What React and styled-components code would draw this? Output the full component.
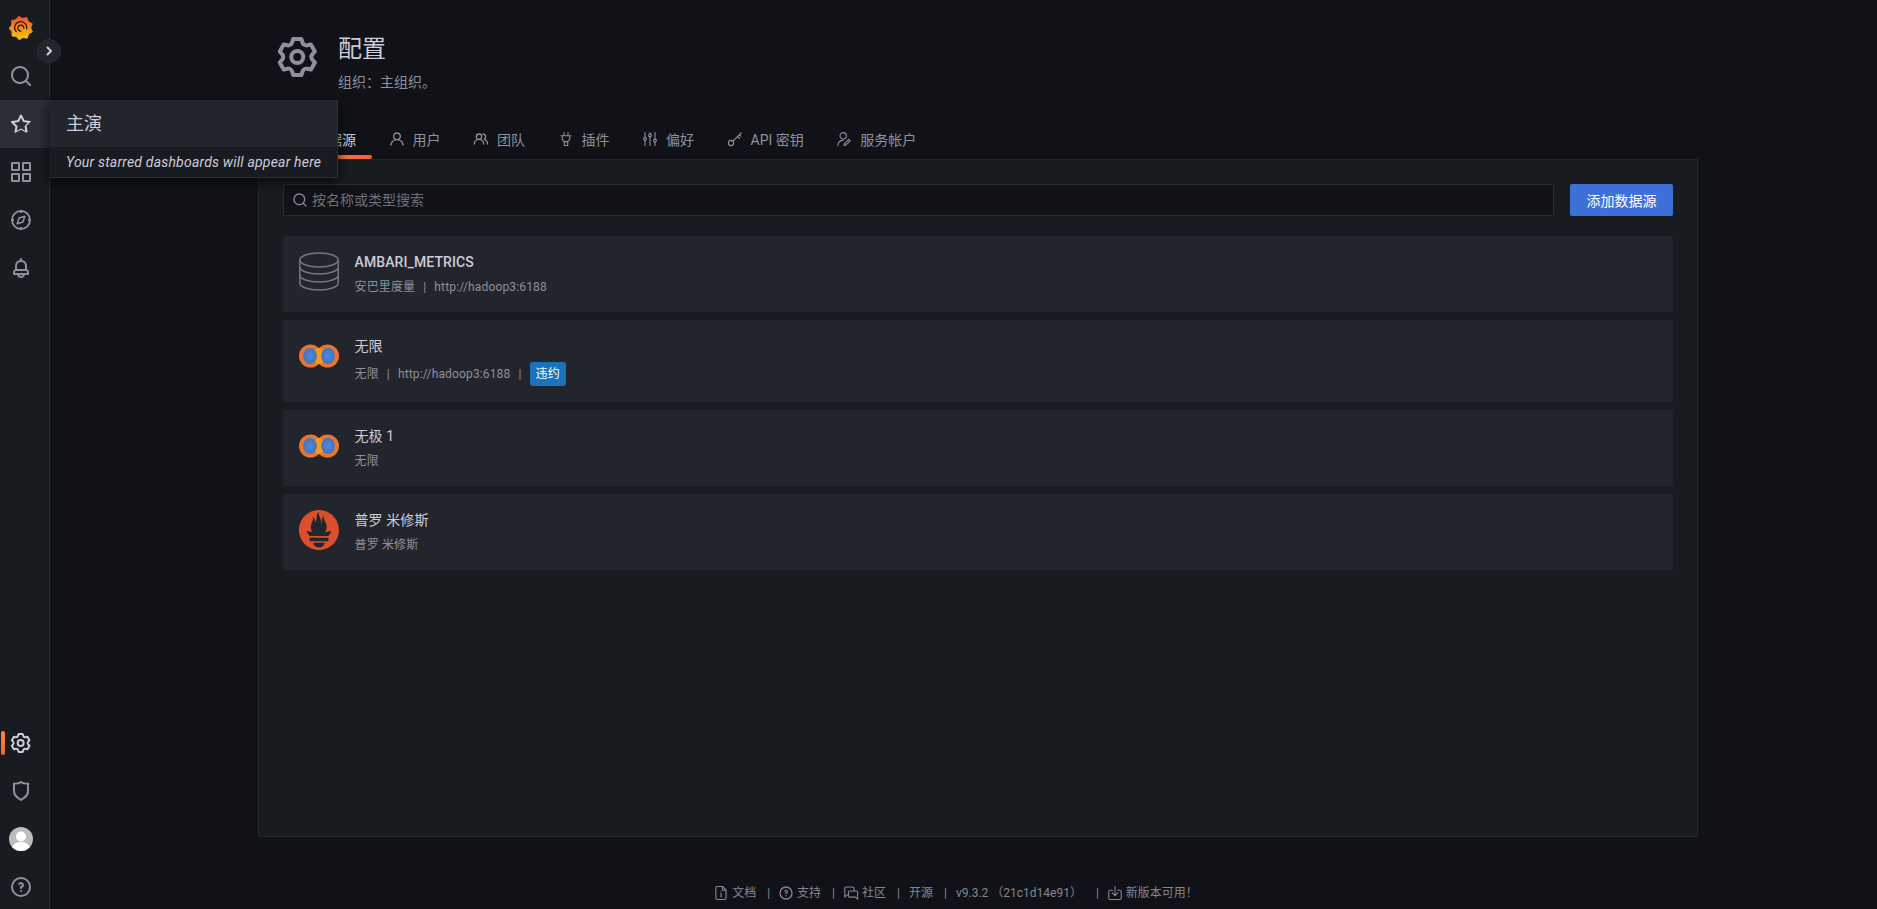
import React from 'react';
import styled, { createGlobalStyle } from 'styled-components';
import { SiPrometheus } from 'react-icons/si';

const GlobalStyle = createGlobalStyle`
    html, body, #root {
        margin: 0;
        height: 100%;
    }
    body {
        background: #111217;
        color: #ccccdc;
        font-family: Roboto, "Noto Sans CJK SC", sans-serif;
        font-size: 14px;
        overflow: hidden;
    }
`;

const Shell = styled.div`
    display: flex;
    height: 100vh;
    overflow: hidden;
`;

// left rail
const Rail = styled.nav`
    position: relative;
    flex: 0 0 50px;
    box-sizing: border-box;
    display: flex;
    flex-direction: column;
    padding-top: 4px;
    background: #181b1f;
    border-right: 1px solid #26292e;
`;
const RailBottom = styled.div`
    margin-top: auto;
    margin-bottom: -2px;
`;
const RailItem = styled.div`
    position: relative;
    height: 48px;
    display: flex;
    align-items: center;
    padding-left: 9px;
    color: ${props => (props.$light ? '#ccccdc' : '#8f9099')};
    background: ${props => (props.$hover ? '#2b2e34' : 'transparent')};
    &.active::before {
        content: "";
        position: absolute;
        left: 1px;
        top: 12px;
        width: 4px;
        height: 24px;
        border-radius: 2px;
        background: linear-gradient(0deg, #f55f3e, #ff8833);
    }
`;
const Toggle = styled.div`
    position: absolute;
    left: 37px;
    top: 39px;
    width: 24px;
    height: 24px;
    box-sizing: border-box;
    border-radius: 50%;
    border: 1px solid #2b2e34;
    background: #22252b;
    color: #ccccdc;
    display: flex;
    align-items: center;
    justify-content: center;
    z-index: 3;
`;
const Avatar = styled.div`
    width: 24px;
    height: 24px;
    border-radius: 50%;
    overflow: hidden;
    background: #bdbdbd;
`;
const Flyout = styled.div`
    position: absolute;
    left: 49px;
    top: 100px;
    width: 289px;
    box-sizing: border-box;
    border-right: 1px solid #2a2d33;
    border-bottom: 1px solid #2a2d33;
    border-radius: 0 0 2px 0;
    box-shadow: 0 4px 12px rgba(1, 4, 9, 0.75);
    z-index: 2;
`;
const FlyoutHead = styled.div`
    height: 47px;
    box-sizing: border-box;
    padding: 0 0 3px 17px;
    display: flex;
    align-items: center;
    background: #22252b;
    font-size: 18px;
`;
const FlyoutBody = styled.div`
    height: 30px;
    box-sizing: border-box;
    padding: 0 0 1px 17px;
    display: flex;
    align-items: center;
    background: #181b1f;
    font-size: 14px;
    font-style: italic;
    letter-spacing: 0.2px;
    white-space: nowrap;
`;

// page
const Main = styled.main`
    flex: 1;
    min-width: 0;
    display: flex;
    flex-direction: column;
`;
const Content = styled.div`
    flex: 1;
    display: flex;
    flex-direction: column;
    width: 1440px;
    margin-left: 208px;
`;
const PageHeader = styled.header`
    display: flex;
    gap: 16px;
    height: 119px;
    box-sizing: border-box;
    padding: 33px 0 0 16px;
    color: #8f9099;
`;
const HeaderText = styled.div`
    padding-top: 3px;
`;
const Title = styled.h1`
    margin: 0;
    font-size: 24px;
    font-weight: 400;
    line-height: 26px;
    color: #ccccdc;
`;
const SubTitle = styled.div`
    margin-top: 12px;
    font-size: 14px;
    line-height: 16px;
    color: #8f9099;
`;
const Tabs = styled.div`
    display: flex;
    gap: 0.5px;
    height: 40px;
    padding-left: 16px;
`;
const Tab = styled.div`
    position: relative;
    display: flex;
    align-items: center;
    gap: 8px;
    padding: 0 16px 1px;
    color: ${props => (props.$active ? '#ccccdc' : '#8f9099')};
    white-space: nowrap;
    &.active::after {
        content: "";
        position: absolute;
        left: 0;
        right: 0;
        bottom: 0;
        height: 4px;
        border-radius: 2px;
        background: linear-gradient(90deg, #ff8833, #f55f3e);
    }
`;
const Panel = styled.section`
    flex: 1;
    box-sizing: border-box;
    padding: 24px;
    background: #181b1f;
    border: 1px solid #25272c;
`;
const Toolbar = styled.div`
    display: flex;
    gap: 16px;
    margin-bottom: 20px;
`;
const SearchBox = styled.label`
    flex: 1;
    height: 32px;
    box-sizing: border-box;
    display: flex;
    align-items: center;
    gap: 4px;
    padding-left: 8px;
    background: #111217;
    border: 1px solid #2a2c32;
    border-radius: 2px;
    color: #85868f;
`;
const SearchInput = styled.input`
    flex: 1;
    border: 0;
    outline: 0;
    background: transparent;
    color: #ccccdc;
    font: inherit;
    padding: 0;
    &::placeholder {
        color: #6f7078;
        opacity: 1;
    }
`;
const AddButton = styled.button`
    flex: 0 0 103px;
    height: 32px;
    border: 0;
    border-radius: 2px;
    padding: 0;
    background: #3d71d9;
    color: #fff;
    font: inherit;
`;
const CardList = styled.div`
    display: flex;
    flex-direction: column;
    gap: 8px;
`;
const Card = styled.div`
    display: flex;
    gap: 15.5px;
    padding: 16px;
    border-radius: 2px;
    background: #22252b;
`;
const Logo = styled.div`
    flex: 0 0 40px;
    height: 40px;
    color: #dc4f2c;
    line-height: 0;
`;
const CardName = styled.div`
    font-size: 14px;
    font-weight: ${props => (props.$plain ? 400 : 500)};
    letter-spacing: 0.1px;
    line-height: 20px;
    color: #ccccdc;
`;
const CardMeta = styled.div`
    margin-top: 6px;
    min-height: 18px;
    display: flex;
    align-items: center;
    font-size: 12px;
    line-height: 18px;
    letter-spacing: 0.15px;
    color: #8f9099;
`;
const Pipe = styled.span`
    margin: 0 8px;
`;
const Badge = styled.span`
    height: 24px;
    padding: 0 6px;
    display: flex;
    align-items: center;
    border-radius: 3px;
    background: #1a73bd;
    color: #fff;
`;

// footer
const Footer = styled.footer`
    flex: 0 0 72px;
    box-sizing: border-box;
    padding: 48px 16px 0 0;
    display: flex;
    align-items: flex-start;
    justify-content: center;
    font-size: 12px;
    line-height: 16px;
    color: #85868f;
`;
const FooterItem = styled.div`
    display: flex;
    align-items: center;
    gap: 3px;
    white-space: pre;
`;
const FooterPipe = styled.span`
    margin: 0 ${props => (props.$icon ? 8 : 9)}px 0 11px;
`;

// icons
const Uni = ({ d, size = 24 }) => (
    <svg width={size} height={size} viewBox="0 0 24 24" fill="currentColor"><path d={d} /></svg>
);
const Line = ({ size = 16, children }) => (
    <svg width={size} height={size} viewBox="0 0 16 16" fill="none" stroke="currentColor" strokeWidth="1.1" strokeLinecap="round" strokeLinejoin="round">{children}</svg>
);

const COG = "M19.9,12.66a1,1,0,0,1,0-1.32L21.18,9.9a1,1,0,0,0,.12-1.17l-2-3.46a1,1,0,0,0-1.07-.48l-1.88.38a1,1,0,0,1-1.15-.66l-.61-1.83A1,1,0,0,0,13.64,2h-4a1,1,0,0,0-1,.68L8.08,4.51a1,1,0,0,1-1.15.66L5,4.79A1,1,0,0,0,4,5.27L2,8.73A1,1,0,0,0,2.1,9.9l1.27,1.44a1,1,0,0,1,0,1.32L2.1,14.1A1,1,0,0,0,2,15.27l2,3.46a1,1,0,0,0,1.07.48l1.88-.38a1,1,0,0,1,1.15.66l.61,1.83a1,1,0,0,0,1,.68h4a1,1,0,0,0,.95-.68l.61-1.83a1,1,0,0,1,1.15-.66l1.88.38a1,1,0,0,0,1.07-.48l2-3.46a1,1,0,0,0-.12-1.17ZM18.41,14l.8.9-1.28,2.22-1.18-.24a3,3,0,0,0-3.45,2L12.92,20H10.36L10,18.86a3,3,0,0,0-3.45-2l-1.18.24L4.07,14.89l.8-.9a3,3,0,0,0,0-4l-.8-.9L5.35,6.89l1.18.24a3,3,0,0,0,3.45-2L10.36,4h2.56l.38,1.14a3,3,0,0,0,3.45,2l1.18-.24,1.28,2.22-.8.9A3,3,0,0,0,18.41,14ZM11.64,8a4,4,0,1,0,4,4A4,4,0,0,0,11.64,8Zm0,6a2,2,0,1,1,2-2A2,2,0,0,1,11.64,14Z";
const SEARCH = "M21.71,20.29,18,16.61A9,9,0,1,0,16.61,18l3.68,3.68a1,1,0,0,0,1.42,0A1,1,0,0,0,21.71,20.29ZM11,18a7,7,0,1,1,7-7A7,7,0,0,1,11,18Z";
const STAR = "M22,9.67A1,1,0,0,0,21.14,9l-5.69-.83L12.9,3a1,1,0,0,0-1.8,0L8.55,8.16,2.86,9a1,1,0,0,0-.81.68,1,1,0,0,0,.25,1l4.13,4-1,5.68A1,1,0,0,0,6.9,20.44L12,17.77l5.1,2.67a.93.93,0,0,0,.46.12,1,1,0,0,0,.59-.19,1,1,0,0,0,.4-1l-1-5.68,4.13-4A1,1,0,0,0,22,9.67Zm-6.15,4a1,1,0,0,0-.29.88l.72,4.2-3.76-2a1.06,1.06,0,0,0-.94,0l-3.76,2,.72-4.2a1,1,0,0,0-.29-.88l-3-3,4.21-.61a1,1,0,0,0,.76-.55L12,5.7l1.88,3.82a1,1,0,0,0,.76.55l4.21.61Z";
const APPS = "M10,13H3a1,1,0,0,0-1,1v7a1,1,0,0,0,1,1h7a1,1,0,0,0,1-1V14A1,1,0,0,0,10,13ZM9,20H4V15H9ZM21,2H14a1,1,0,0,0-1,1v7a1,1,0,0,0,1,1h7a1,1,0,0,0,1-1V3A1,1,0,0,0,21,2ZM20,9H15V4h5Zm1,4H14a1,1,0,0,0-1,1v7a1,1,0,0,0,1,1h7a1,1,0,0,0,1-1V14A1,1,0,0,0,21,13Zm-1,7H15V15h5ZM10,2H3A1,1,0,0,0,2,3v7a1,1,0,0,0,1,1h7a1,1,0,0,0,1-1V3A1,1,0,0,0,10,2ZM9,9H4V4H9Z";
const BELL = "M18,13.18V10a6,6,0,0,0-5-5.91V3a1,1,0,0,0-2,0V4.09A6,6,0,0,0,6,10v3.18A3,3,0,0,0,4,16v2a1,1,0,0,0,1,1H8.14a4,4,0,0,0,7.72,0H19a1,1,0,0,0,1-1V16A3,3,0,0,0,18,13.18ZM8,10a4,4,0,0,1,8,0v3H8Zm4,10a2,2,0,0,1-1.72-1h3.44A2,2,0,0,1,12,20Zm6-3H6V16a1,1,0,0,1,1-1H17a1,1,0,0,1,1,1Z";
const SHIELD = "M19.63,3.65a1,1,0,0,0-.84-.2,8,8,0,0,1-6.22-1.27,1,1,0,0,0-1.14,0A8,8,0,0,1,5.21,3.45a1,1,0,0,0-.84.2A1,1,0,0,0,4,4.43v7.45a9,9,0,0,0,3.77,7.33l3.65,2.6a1,1,0,0,0,1.16,0l3.65-2.6A9,9,0,0,0,20,11.88V4.43A1,1,0,0,0,19.63,3.65ZM18,11.88a7,7,0,0,1-2.93,5.7L12,19.77,8.93,17.58A7,7,0,0,1,6,11.88V5.58a10,10,0,0,0,6-1.39,10,10,0,0,0,6,1.39Z";
const HELP = "M11.29,15.29a1.58,1.58,0,0,0-.12.15.76.76,0,0,0-.09.18.64.64,0,0,0-.06.18,1.36,1.36,0,0,0,0,.2.84.84,0,0,0,.08.38.9.9,0,0,0,.54.54.94.94,0,0,0,.76,0,.9.9,0,0,0,.54-.54A1,1,0,0,0,13,16a1,1,0,0,0-.29-.71A1,1,0,0,0,11.29,15.29ZM12,2A10,10,0,1,0,22,12,10,10,0,0,0,12,2Zm0,18a8,8,0,1,1,8-8A8,8,0,0,1,12,20ZM12,7A3,3,0,0,0,9.4,8.5a1,1,0,1,0,1.73,1A1,1,0,0,1,12,9a1,1,0,0,1,0,2,1,1,0,0,0-1,1v1a1,1,0,0,0,2,0v-.18A3,3,0,0,0,12,7Z";
const USER = "M15.71,12.71a6,6,0,1,0-7.42,0,10,10,0,0,0-6.22,8.18,1,1,0,0,0,2,.22,8,8,0,0,1,15.9,0,1,1,0,0,0,1,.89h.11a1,1,0,0,0,.88-1.1A10,10,0,0,0,15.71,12.71ZM12,12a4,4,0,1,1,4-4A4,4,0,0,1,12,12Z";
const USERS = "M12.3,12.22A4.92,4.92,0,0,0,14,8.5a5,5,0,0,0-10,0,4.92,4.92,0,0,0,1.7,3.72A8,8,0,0,0,1,19.5a1,1,0,0,0,2,0,6,6,0,0,1,12,0,1,1,0,0,0,2,0A8,8,0,0,0,12.3,12.22ZM9,11.5a3,3,0,1,1,3-3A3,3,0,0,1,9,11.5Zm9.74.32A5,5,0,0,0,15,3.5a1,1,0,0,0,0,2,3,3,0,0,1,3,3,3,3,0,0,1-1.5,2.59,1,1,0,0,0-.5.84,1,1,0,0,0,.45.86l.39.26.13.07a7,7,0,0,1,4,6.38,1,1,0,0,0,2,0A9,9,0,0,0,18.74,11.82Z";

const Compass = () => (
    <svg width="24" height="24" viewBox="0 0 24 24" fill="none" stroke="currentColor" strokeWidth="1.9" strokeLinejoin="round">
        <circle cx="12" cy="12" r="9" />
        <path d="M12 2.5v2.5M12 19v2.5M2.5 12H5M19 12h2.5" />
        <path d="M15.8 8.2l-1.9 5.7-5.7 1.9 1.9-5.7z" strokeWidth="1.6" />
    </svg>
);
const PlugIcon = () => (
    <Line>
        <path d="M6 1.5v3.2M10 1.5v3.2M3 4.7h10M4.2 4.7v3.6L6.3 10.6h3.4l2.1-2.3V4.7M6.3 10.6v3.9h3.4v-3.9" />
    </Line>
);
const SlidersIcon = () => (
    <Line>
        <path d="M3 1.5v5M3 9.5v5M8 1.5v1.5M8 6v8.5M13 1.5v6.5M13 11v3.5" />
        <circle cx="3" cy="8" r="1.4" />
        <circle cx="8" cy="4.5" r="1.4" />
        <circle cx="13" cy="9.5" r="1.4" />
    </Line>
);
const KeyIcon = () => (
    <Line>
        <circle cx="4" cy="12" r="2.6" />
        <path d="M5.9 10.1L14.2 2M10.5 5.6l2 1.9M12.4 3.8l1.4 1.4" />
    </Line>
);
const UserEditIcon = () => (
    <Line>
        <circle cx="7.2" cy="4.8" r="3.2" />
        <path d="M1.8 14.5c.3-3 2.3-5.1 5.4-5.1" />
        <path d="M8 14.5l.4-1.7 4.4-4.4 1.4 1.4-4.4 4.3z" />
    </Line>
);
const DocIcon = () => (
    <Line>
        <path d="M9.5 1.5H4.2c-.8 0-1.3.5-1.3 1.2v10.6c0 .7.5 1.2 1.3 1.2h7.6c.8 0 1.3-.5 1.3-1.2V5.2zM9.5 1.5v3.7h3.6" />
        <path d="M8 8v4M8 6.2v.1" />
    </Line>
);
const HelpIcon = () => <Uni d={HELP} size={16} />;
const ChatIcon = () => (
    <Line>
        <path d="M11 6V3.2c0-.8-.5-1.2-1.2-1.2H3c-.8 0-1.2.4-1.2 1.2V12l2.4-2.2h1.3" />
        <path d="M6.6 6h6.9c.7 0 1.1.4 1.1 1.1v7.1l-2.2-2.1H6.6c-.7 0-1.1-.4-1.1-1.1V7.1c0-.7.4-1.1 1.1-1.1z" />
    </Line>
);
const DownloadIcon = () => (
    <Line>
        <path d="M8 1.5v9M5.2 7.8L8 10.6l2.8-2.8" />
        <path d="M5.5 5.2H3c-.7 0-1.2.5-1.2 1.2v6.9c0 .7.5 1.2 1.2 1.2h10c.7 0 1.2-.5 1.2-1.2V6.4c0-.7-.5-1.2-1.2-1.2h-2.5" />
    </Line>
);

const gearPoints = () => {
    const pts = [];
    const teeth = 9;
    for (let i = 0; i < teeth * 2; i++) {
        const r = i % 2 === 0 ? 12 : 9.8;
        const a = (Math.PI * i) / teeth - Math.PI / 2 - 0.2;
        pts.push((12 + r * Math.cos(a)).toFixed(2) + ',' + (12 + r * Math.sin(a)).toFixed(2));
    }
    return pts.join(' ');
};

const GrafanaLogo = () => (
    <svg width="24" height="24" viewBox="0 0 24 24">
        <defs>
            <linearGradient id="grafana" x1="0" y1="0" x2="0" y2="1">
                <stop offset="0" stopColor="#f0502a" />
                <stop offset="1" stopColor="#fbca0a" />
            </linearGradient>
        </defs>
        <polygon points={gearPoints()} fill="url(#grafana)" stroke="url(#grafana)" strokeWidth="0.8" strokeLinejoin="round" />
        <path d="M7.2 15.6A6 6 0 1 1 17.6 12.6M14.8 12.2a3 3 0 1 0-3 2.9" fill="none" stroke="#1e1c1f" strokeWidth="1.25" strokeLinecap="round" />
    </svg>
);
const DatabaseLogo = () => (
    <svg width="40" height="40" viewBox="0 0 40 40" fill="none" stroke="#77777b" strokeWidth="1.5">
        <ellipse cx="20" cy="8" rx="19.2" ry="7" />
        <path d="M.8 8v7c0 3.9 8.6 7 19.2 7s19.2-3.1 19.2-7V8" />
        <path d="M.8 15v8c0 3.9 8.6 7 19.2 7s19.2-3.1 19.2-7v-8" />
        <path d="M.8 23v8c0 3.9 8.6 7 19.2 7s19.2-3.1 19.2-7v-8" />
    </svg>
);
const InfinityLogo = ({ id }) => (
    <svg width="40" height="40" viewBox="0 0 40 40">
        <defs>
            <radialGradient id={id}>
                <stop offset="0" stopColor="#4f8bd8" />
                <stop offset="1" stopColor="#3f74c0" />
            </radialGradient>
        </defs>
        <circle cx="11.5" cy="20" r="11.5" fill="#ec7430" />
        <circle cx="28.5" cy="20" r="11.5" fill="#ec7430" />
        <ellipse cx="20" cy="20" rx="5.5" ry="8" fill="#fa9a1a" />
        <ellipse cx="11" cy="20" rx="6.8" ry="8" fill={`url(#${id})`} />
        <ellipse cx="29" cy="20" rx="6.8" ry="8" fill={`url(#${id})`} />
    </svg>
);
const AvatarFigure = () => (
    <svg width="24" height="24" viewBox="0 0 24 24" fill="#fff">
        <circle cx="12" cy="9.5" r="5" />
        <path d="M2.5 24c0-6 4-9 9.5-9s9.5 3 9.5 9z" />
    </svg>
);

const tabs = [
    { label: '数据源', icon: <Uni d={USER} size={16} /> },
    { label: '用户', icon: <Uni d={USER} size={16} /> },
    { label: '团队', icon: <Uni d={USERS} size={16} /> },
    { label: '插件', icon: <PlugIcon /> },
    { label: '偏好', icon: <SlidersIcon /> },
    { label: 'API 密钥', icon: <KeyIcon /> },
    { label: '服务帐户', icon: <UserEditIcon /> },
];

export default function App() {
    return (
        <Shell>
            <GlobalStyle />
            <Rail>
                <RailItem><GrafanaLogo /></RailItem>
                <RailItem><Uni d={SEARCH} /></RailItem>
                <RailItem $hover $light><Uni d={STAR} /></RailItem>
                <RailItem><Uni d={APPS} /></RailItem>
                <RailItem><Compass /></RailItem>
                <RailItem><Uni d={BELL} /></RailItem>
                <RailBottom>
                    <RailItem className="active" $light><Uni d={COG} /></RailItem>
                    <RailItem><Uni d={SHIELD} /></RailItem>
                    <RailItem><Avatar><AvatarFigure /></Avatar></RailItem>
                    <RailItem><Uni d={HELP} /></RailItem>
                </RailBottom>
                <Toggle>
                    <svg width="12" height="12" viewBox="0 0 12 12" fill="none" stroke="currentColor" strokeWidth="2" strokeLinecap="round" strokeLinejoin="round"><path d="M4.5 2.5L8 6l-3.5 3.5" /></svg>
                </Toggle>
                <Flyout>
                    <FlyoutHead>主演</FlyoutHead>
                    <FlyoutBody>Your starred dashboards will appear here</FlyoutBody>
                </Flyout>
            </Rail>
            <Main>
                <Content>
                    <PageHeader>
                        <Uni d={COG} size={48} />
                        <HeaderText>
                            <Title>配置</Title>
                            <SubTitle>组织：主组织。</SubTitle>
                        </HeaderText>
                    </PageHeader>
                    <Tabs>
                        {tabs.map((t, i) => (
                            <Tab key={t.label} className={i === 0 ? 'active' : ''} $active={i === 0}>
                                {t.icon}{t.label}
                            </Tab>
                        ))}
                    </Tabs>
                    <Panel>
                        <Toolbar>
                            <SearchBox>
                                <Uni d={SEARCH} size={16} />
                                <SearchInput placeholder="按名称或类型搜索" />
                            </SearchBox>
                            <AddButton>添加数据源</AddButton>
                        </Toolbar>
                        <CardList>
                            <Card>
                                <Logo><DatabaseLogo /></Logo>
                                <div>
                                    <CardName>AMBARI_METRICS</CardName>
                                    <CardMeta>安巴里度量<Pipe>|</Pipe>http://hadoop3:6188</CardMeta>
                                </div>
                            </Card>
                            <Card>
                                <Logo><InfinityLogo id="inf1" /></Logo>
                                <div>
                                    <CardName $plain>无限</CardName>
                                    <CardMeta>无限<Pipe>|</Pipe>http://hadoop3:6188<Pipe>|</Pipe><Badge>违约</Badge></CardMeta>
                                </div>
                            </Card>
                            <Card>
                                <Logo><InfinityLogo id="inf2" /></Logo>
                                <div>
                                    <CardName $plain>无极 1</CardName>
                                    <CardMeta>无限</CardMeta>
                                </div>
                            </Card>
                            <Card>
                                <Logo><SiPrometheus size={40} /></Logo>
                                <div>
                                    <CardName $plain>普罗 米修斯</CardName>
                                    <CardMeta>普罗 米修斯</CardMeta>
                                </div>
                            </Card>
                        </CardList>
                    </Panel>
                </Content>
                <Footer>
                    <FooterItem><DocIcon />文档</FooterItem>
                    <FooterPipe $icon>|</FooterPipe>
                    <FooterItem><HelpIcon />支持</FooterItem>
                    <FooterPipe $icon>|</FooterPipe>
                    <FooterItem><ChatIcon />社区</FooterItem>
                    <FooterPipe>|</FooterPipe>
                    <FooterItem>开源</FooterItem>
                    <FooterPipe>|</FooterPipe>
                    <FooterItem>v9.3.2 （21c1d14e91） </FooterItem>
                    <FooterPipe $icon>|</FooterPipe>
                    <FooterItem><DownloadIcon />新版本可用！</FooterItem>
                </Footer>
            </Main>
        </Shell>
    );
}
